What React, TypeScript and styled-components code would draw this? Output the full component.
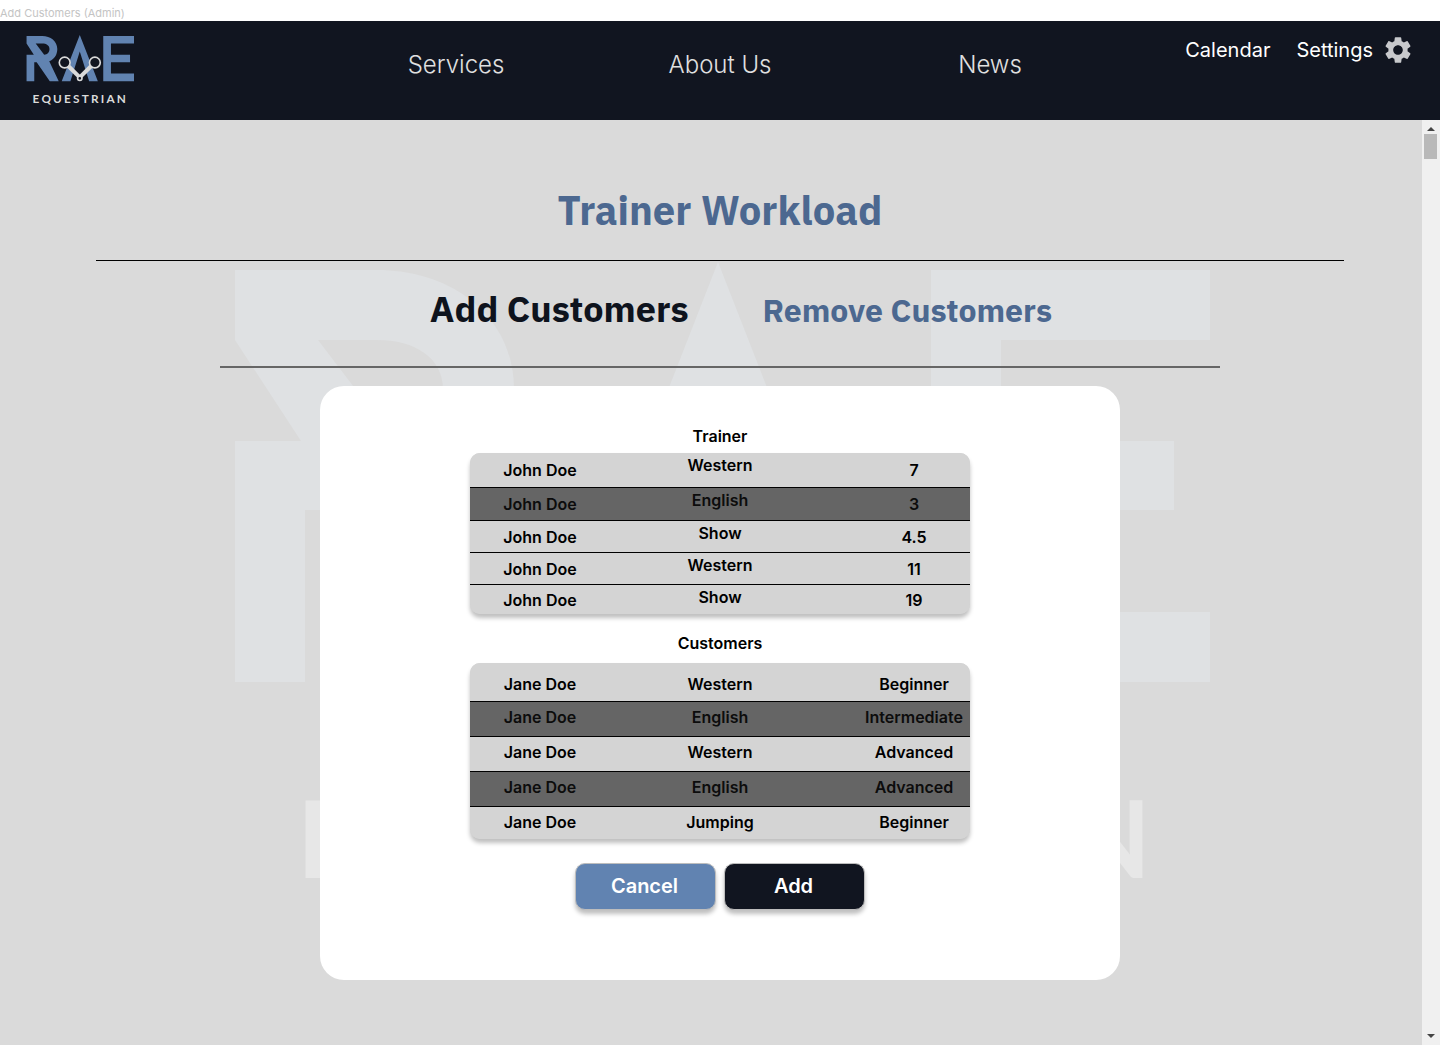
import React from 'react';
import styled, { createGlobalStyle } from 'styled-components';
import { MdSettings } from 'react-icons/md';

const sans = `Inter, "Noto Sans", sans-serif`;
const display = `"IBM Plex Sans", "Noto Sans", "Open Sans", sans-serif`;

const color = {
  night: '#111520',
  blue: '#6183b1',
  steel: '#4c6890',
  page: '#dadada',
  row: '#d4d4d4',
  rowDark: '#656565',
};

const GlobalStyle = createGlobalStyle`
  *, *::before, *::after { box-sizing: border-box; }
  body { margin: 0; background: #fff; font-family: ${sans}; }
  h1, h2 { margin: 0; }
  a { color: inherit; text-decoration: none; }
`;

const Page = styled.div`
  display: flex;
  flex-direction: column;
  min-height: 100vh;
`;

const FrameLabel = styled.div`
  height: 21px;
  padding-top: 5px;
  font-size: 11px;
  line-height: 16px;
  color: #c4c4c4;
`;

const Header = styled.header`
  display: grid;
  grid-template-columns: 1fr auto 1fr;
  height: 99px;
  padding: 0 26px;
  background: ${color.night};
  color: #fff;
`;

const Brand = styled.a`
  justify-self: start;
  padding-top: 14px;
`;

const Nav = styled.nav`
  display: grid;
  grid-template-columns: 258px 270px 270px;
  padding: 28px 0 0 12px;
  justify-items: center;
  font-size: 24px;
  line-height: 32px;
  font-weight: 300;
  color: #e0e0e0;
`;

const Tools = styled.div`
  display: flex;
  justify-content: flex-end;
  align-items: center;
  height: 32px;
  margin-top: 13px;
  font-size: 20px;
  font-weight: 400;
`;

const ToolLink = styled.a`
  display: flex;
  align-items: center;
  gap: 9px;
  margin-left: 26px;
  line-height: 32px;
  svg { color: #c8c9cc; }
`;

const Main = styled.main`
  position: relative;
  flex: 1;
  display: flex;
  flex-direction: column;
  align-items: center;
  padding-bottom: 65px;
  background: ${color.page};
`;

const Watermark = styled.div`
  position: absolute;
  top: 142px;
  left: 0;
  right: 0;
  display: flex;
  justify-content: center;
  overflow: hidden;
  pointer-events: none;
`;

const Content = styled.div`
  position: relative;
  display: flex;
  flex-direction: column;
  align-items: center;
  width: 100%;
`;

const TitleBar = styled.div`
  width: calc(100% - 192px);
  padding: 63px 0 23px;
  border-bottom: 1px solid #000;
  text-align: center;
`;

const Title = styled.h1`
  font: 700 40px/54px ${display};
  color: ${color.steel};
`;

const Tabs = styled.div`
  display: flex;
  justify-content: center;
  align-items: baseline;
  gap: 74px;
  width: min(1000px, 100%);
  height: 107px;
  padding: 24px 0 0 42px;
  border-bottom: 2px solid #666;
`;

const Tab = styled.button<{ $active?: boolean }>`
  padding: 0;
  border: 0;
  background: none;
  font: 700 ${p => (p.$active ? 36 : 32)}px/48px ${display};
  color: ${p => (p.$active ? '#0e131d' : color.steel)};
  white-space: nowrap;
  cursor: pointer;
`;

const Card = styled.section`
  display: flex;
  flex-direction: column;
  align-items: center;
  width: min(800px, 100%);
  margin-top: 18px;
  padding: 38px 24px 70px;
  border-radius: 24px;
  background: #fff;
`;

const Label = styled.h2<{ $gap: number }>`
  margin-bottom: ${p => p.$gap}px;
  font-size: 16px;
  line-height: 24px;
  font-weight: 600;
`;

const TableFrame = styled.div<{ $after: number }>`
  width: min(500px, 100%);
  margin-bottom: ${p => p.$after}px;
  border-radius: 10px;
  overflow: hidden;
  background: ${color.row};
  box-shadow: 0 4px 4px rgba(0, 0, 0, 0.25);
`;

const Table = styled.table`
  width: 100%;
  table-layout: fixed;
  border-collapse: separate;
  border-spacing: 0;
  font-size: 16px;
  font-weight: 600;
  text-align: center;
`;

const Row = styled.tr<{ $height: number; $selected?: boolean }>`
  height: ${p => p.$height}px;
  background: ${p => (p.$selected ? color.rowDark : color.row)};
  color: ${p => (p.$selected ? '#0c0c0c' : '#000')};
  &:not(:last-child) td { border-bottom: 1px solid #000; }
`;

const Cell = styled.td<{ $line: number; $top?: boolean; $lead?: boolean }>`
  padding: ${p => (p.$lead ? 6 : 0)}px 0 0;
  line-height: ${p => p.$line}px;
  vertical-align: ${p => (p.$top ? 'top' : 'middle')};
  white-space: nowrap;
  &:last-child { padding-left: 28px; }
`;

const Actions = styled.div`
  display: flex;
  gap: 8px;
`;

const Button = styled.button<{ $primary?: boolean }>`
  width: 141px;
  height: 47px;
  padding: 0 2px 2px 0;
  border: 1px solid #bdbdbd;
  border-radius: 10px;
  background: ${p => (p.$primary ? color.night : color.blue)};
  box-shadow: 0 4px 4px rgba(0, 0, 0, 0.25);
  font: 600 20px/24px ${sans};
  color: #fff;
  cursor: pointer;
`;

const ScrollTrack = styled.div`
  position: absolute;
  top: 0;
  right: 0;
  bottom: 0;
  display: flex;
  flex-direction: column;
  justify-content: space-between;
  width: 18px;
  padding: 7px 3px 7px 2px;
  background: #f0f0f0;
`;

const ScrollTop = styled.div`
  display: flex;
  flex-direction: column;
  align-items: center;
  gap: 3px;
`;

const Arrow = styled.span<{ $down?: boolean }>`
  align-self: center;
  border: 4px solid transparent;
  border-width: ${p => (p.$down ? '4px 4px 0' : '0 4px 4px')};
  border-${p => (p.$down ? 'top' : 'bottom')}-color: #444;
`;

const Thumb = styled.div`
  width: 13px;
  height: 25px;
  background: #b9b9b9;
`;

const Wordmark = styled.text`
  font-family: Lato, sans-serif;
  font-weight: 700;
  font-size: 107px;
`;

const TrackedWordmark = styled(Wordmark)`
  letter-spacing: 20px;
`;

type LogoProps = { width: number; main: string; accent: string; backdrop?: boolean };

function Logo({ width, main, accent, backdrop }: LogoProps) {
  return (
    <svg width={width} viewBox="-5 0 980 660">
      <g fill={main}>
        <path d="M0 8H142C218 8 279 55 279 127C279 180 252 220 206 238L292 420H211L92 248H70V420H0V179H66L0 78ZM83 78L160 179C190 177 208 158 208 127C208 96 180 78 142 78Z" />
        <path d="M483 0L647 420H568L483 150L398 420H319Z" />
        <path d="M696 8H975V78H766V179H939V248H766V350H975V420H696Z" />
      </g>
      {backdrop ? (
        /* The card hides the middle of the word, so only its ends are set. */
        <g fill={accent}>
          <Wordmark x="62" y="616">E</Wordmark>
          <Wordmark x="916" y="616" textAnchor="end">N</Wordmark>
        </g>
      ) : (
        <>
          <g fill={accent}>
            <path d="M366 296L394 270L496 372L470 398Z" />
            <path d="M600 296L572 270L470 372L496 398Z" />
          </g>
          <g stroke={accent} fill={color.night} strokeWidth="15">
            <circle cx="346" cy="250" r="49" />
            <circle cx="620" cy="250" r="49" />
            <circle cx="483" cy="393" r="20" />
          </g>
          <TrackedWordmark x="55" y="616" fill={accent}>EQUESTRIAN</TrackedWordmark>
        </>
      )}
    </svg>
  );
}

const trainers = [
  { height: 35, cells: ['John Doe', 'Western', '7'] },
  { height: 33, cells: ['John Doe', 'English', '3'], selected: true },
  { height: 32, cells: ['John Doe', 'Show', '4.5'] },
  { height: 32, cells: ['John Doe', 'Western', '11'] },
  { height: 29, cells: ['John Doe', 'Show', '19'] },
];

const customers = [
  { height: 39, cells: ['Jane Doe', 'Western', 'Beginner'] },
  { height: 35, cells: ['Jane Doe', 'English', 'Intermediate'], selected: true },
  { height: 35, cells: ['Jane Doe', 'Western', 'Advanced'] },
  { height: 35, cells: ['Jane Doe', 'English', 'Advanced'], selected: true },
  { height: 32, cells: ['Jane Doe', 'Jumping', 'Beginner'] },
];

const Column = styled.col<{ $share: number }>`
  width: ${p => p.$share}%;
`;

const Columns = () => (
  <colgroup>
    <Column $share={28} />
    <Column $share={44} />
    <Column $share={28} />
  </colgroup>
);

export default function App() {
  return (
    <>
      <GlobalStyle />
      <Page>
        <FrameLabel>Add Customers (Admin)</FrameLabel>
        <Header>
          <Brand href="#home" aria-label="RAE Equestrian">
            <Logo width={108} main={color.blue} accent="#dadada" />
          </Brand>
          <Nav>
            <a href="#services">Services</a>
            <a href="#about">About Us</a>
            <a href="#news">News</a>
          </Nav>
          <Tools>
            <ToolLink href="#calendar">Calendar</ToolLink>
            <ToolLink href="#settings">
              Settings
              <MdSettings size={32} />
            </ToolLink>
          </Tools>
        </Header>
        <Main>
          <Watermark aria-hidden="true">
            <Logo width={980} main="#dfe1e3" accent="#e7e7e7" backdrop />
          </Watermark>
          <Content>
            <TitleBar>
              <Title>Trainer Workload</Title>
            </TitleBar>
            <Tabs>
              <Tab type="button" $active>Add Customers</Tab>
              <Tab type="button">Remove Customers</Tab>
            </Tabs>
            <Card>
              <Label id="trainers" $gap={5}>Trainer</Label>
              <TableFrame $after={17}>
                <Table aria-labelledby="trainers">
                  <Columns />
                  <tbody>
                    {trainers.map((t, i) => (
                      <Row key={i} $height={t.height} $selected={t.selected}>
                        {t.cells.map((c, j) => (
                          <Cell key={j} $line={24} $top={j === 1}>{c}</Cell>
                        ))}
                      </Row>
                    ))}
                  </tbody>
                </Table>
              </TableFrame>
              <Label id="customers" $gap={8}>Customers</Label>
              <TableFrame $after={24}>
                <Table aria-labelledby="customers">
                  <Columns />
                  <tbody>
                    {customers.map((t, i) => (
                      <Row key={i} $height={t.height} $selected={t.selected}>
                        {t.cells.map((c, j) => (
                          <Cell key={j} $line={30} $top $lead={i === 0}>{c}</Cell>
                        ))}
                      </Row>
                    ))}
                  </tbody>
                </Table>
              </TableFrame>
              <Actions>
                <Button type="button">Cancel</Button>
                <Button type="button" $primary>Add</Button>
              </Actions>
            </Card>
          </Content>
          <ScrollTrack aria-hidden="true">
            <ScrollTop>
              <Arrow />
              <Thumb />
            </ScrollTop>
            <Arrow $down />
          </ScrollTrack>
        </Main>
      </Page>
    </>
  );
}
